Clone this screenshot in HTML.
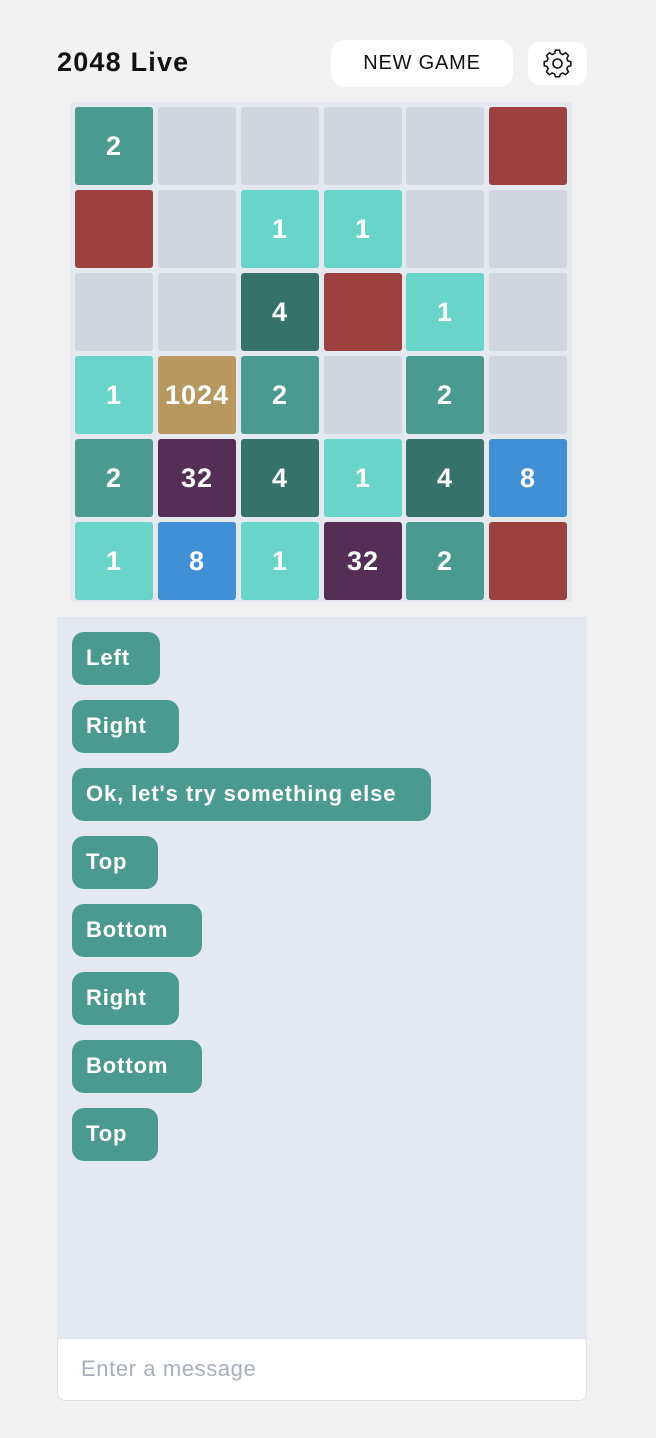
<!DOCTYPE html>
<html><head><style>
*{box-sizing:border-box;margin:0;padding:0}
body{width:656px;height:1438px;background:#f2f2f2;font-family:"Liberation Sans",sans-serif;position:relative;overflow:hidden}
.title{position:absolute;left:57px;top:47px;font-size:27px;font-weight:bold;color:#111;letter-spacing:1.2px}
.ng{position:absolute;left:331px;top:40px;width:182px;height:47px;background:#fff;border-radius:14px;font-size:20px;color:#111;text-align:center;line-height:47px;letter-spacing:0.8px}
.gear{position:absolute;left:528px;top:42px;width:59px;height:43px;background:#fff;border-radius:12px}
.board{position:absolute;left:70px;top:102px;width:502px;height:500px;background:#e4e8ef;border-radius:3px}
.t{position:absolute;width:78px;height:78px;border-radius:3px;background:#d0d5de;color:#fff;font-weight:bold;font-size:27px;text-align:center;line-height:78px;letter-spacing:1px}
.a{background:#4a9a8f}.b{background:#68d5c8}.c{background:#35736a}.r{background:#9b4140}.g{background:#b89860}.p{background:#552e55}.u{background:#418fd4}
.chat{position:absolute;left:57px;top:617px;width:530px;height:722px;background:#e4e9f1}
.m{position:absolute;left:72px;height:53px;background:#4a9a8f;border-radius:12px;color:#fff;font-weight:bold;font-size:22px;line-height:51px;padding-left:14px;letter-spacing:0.9px}
.inp{position:absolute;left:57px;top:1338px;width:530px;height:63px;background:#fff;border:1px solid #dde0e5;border-radius:0 0 8px 8px;font-size:22px;color:#a8b0bd;padding-left:23px;line-height:60px;letter-spacing:0.6px}
</style></head><body>
<div class="title">2048 Live</div>
<div class="ng">NEW GAME</div>
<div class="gear"><svg width="59" height="43" viewBox="0 0 59 43"><g transform="translate(29.5,21.5)" fill="none" stroke="#111" stroke-width="1.6"><path d="M-2.2,-13 L2.2,-13 L3,-9.6 L5.6,-8.4 L8.6,-10.2 L11.6,-7.2 L9.8,-4.2 L11,-1.6 L14,-0.8 L14,3.4 L11,4.2 L9.8,6.8 L11.6,9.8 L8.6,12.8 L5.6,11 L3,12.2 L2.2,15 L-2.2,15 L-3,12.2 L-5.6,11 L-8.6,12.8 L-11.6,9.8 L-9.8,6.8 L-11,4.2 L-14,3.4 L-14,-0.8 L-11,-1.6 L-9.8,-4.2 L-11.6,-7.2 L-8.6,-10.2 L-5.6,-8.4 L-3,-9.6 Z" transform="translate(0,-1) scale(0.95)"/><circle cx="0" cy="0" r="4.5"/></g></svg></div>
<div class="board">
<div class="t a" style="left:5px;top:5px">2</div><div class="t" style="left:88px;top:5px"></div><div class="t" style="left:171px;top:5px"></div><div class="t" style="left:254px;top:5px"></div><div class="t" style="left:336px;top:5px"></div><div class="t r" style="left:419px;top:5px"></div>
<div class="t r" style="left:5px;top:88px"></div><div class="t" style="left:88px;top:88px"></div><div class="t b" style="left:171px;top:88px">1</div><div class="t b" style="left:254px;top:88px">1</div><div class="t" style="left:336px;top:88px"></div><div class="t" style="left:419px;top:88px"></div>
<div class="t" style="left:5px;top:171px"></div><div class="t" style="left:88px;top:171px"></div><div class="t c" style="left:171px;top:171px">4</div><div class="t r" style="left:254px;top:171px"></div><div class="t b" style="left:336px;top:171px">1</div><div class="t" style="left:419px;top:171px"></div>
<div class="t b" style="left:5px;top:254px">1</div><div class="t g" style="left:88px;top:254px">1024</div><div class="t a" style="left:171px;top:254px">2</div><div class="t" style="left:254px;top:254px"></div><div class="t a" style="left:336px;top:254px">2</div><div class="t" style="left:419px;top:254px"></div>
<div class="t a" style="left:5px;top:337px">2</div><div class="t p" style="left:88px;top:337px">32</div><div class="t c" style="left:171px;top:337px">4</div><div class="t b" style="left:254px;top:337px">1</div><div class="t c" style="left:336px;top:337px">4</div><div class="t u" style="left:419px;top:337px">8</div>
<div class="t b" style="left:5px;top:420px">1</div><div class="t u" style="left:88px;top:420px">8</div><div class="t b" style="left:171px;top:420px">1</div><div class="t p" style="left:254px;top:420px">32</div><div class="t a" style="left:336px;top:420px">2</div><div class="t r" style="left:419px;top:420px"></div>
</div>
<div class="chat"></div>
<div class="m" style="top:632px;width:88px">Left</div>
<div class="m" style="top:700px;width:107px">Right</div>
<div class="m" style="top:768px;width:359px">Ok, let's try something else</div>
<div class="m" style="top:836px;width:86px">Top</div>
<div class="m" style="top:904px;width:130px">Bottom</div>
<div class="m" style="top:972px;width:107px">Right</div>
<div class="m" style="top:1040px;width:130px">Bottom</div>
<div class="m" style="top:1108px;width:86px">Top</div>
<div class="inp">Enter a message</div>
</body></html>
